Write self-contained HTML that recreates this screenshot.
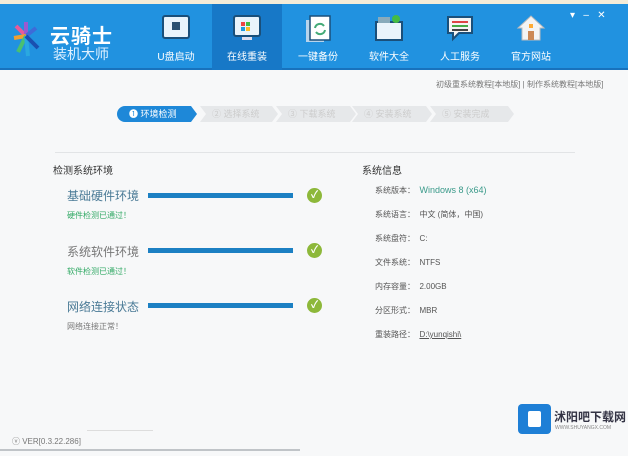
<!DOCTYPE html>
<html><head><meta charset="utf-8"><style>
*{margin:0;padding:0;box-sizing:border-box}
body{width:628px;height:456px;background:#f7f8f9;font-family:"Liberation Sans","Noto Sans CJK SC",sans-serif;position:relative;overflow:hidden;color:#555}
.abs{position:absolute}
#top{left:0;top:0;width:628px;height:4px;background:#f4ecd8}
#hdr{left:0;top:4px;width:628px;height:66px;background:#2192e0;border-bottom:2px solid #1872bd}
.tab{position:absolute;top:4px;width:70px;height:66px;color:#fff;font-size:10px;text-align:center}
.tab svg{display:block;margin:10px auto 6px}
.sel{background:#1778c7}
.t{position:absolute;font-size:10px;white-space:nowrap}
.bar{position:absolute;left:148px;width:145px;height:5px;background:#1c80c3}
.chk{position:absolute;left:307px;width:15px;height:15px;border-radius:50%;background:#8db83a;color:#fff;font-size:10px;text-align:center;line-height:15px;font-weight:bold}
.step{position:absolute;top:106px;height:16px;background:#e6e8ea;color:#ccc;font-size:9px;line-height:16px;padding-left:12px;clip-path:polygon(0 0,calc(100% - 6px) 0,100% 50%,calc(100% - 6px) 100%,0 100%,6px 50%)}
</style></head><body>
<div id="top" class="abs"></div>
<div id="hdr" class="abs"></div>
<svg class="abs" style="left:12px;top:18px" width="28" height="40" viewBox="0 0 28 40">
<path d="M14 18 L4 8" stroke="#e85a9a" stroke-width="4"/><path d="M14 18 L14 4" stroke="#9b59d0" stroke-width="4"/><path d="M14 18 L24 10" stroke="#3e6bd8" stroke-width="4"/><path d="M14 18 L2 20" stroke="#f0a030" stroke-width="4"/><path d="M14 18 L6 34" stroke="#4ac070" stroke-width="4"/><path d="M14 18 L16 38" stroke="#2aa8e0" stroke-width="4"/><path d="M14 18 L26 30" stroke="#1a50b0" stroke-width="4"/></svg>
<div class="t" style="left:50px;top:20px;color:#fff;font-size:20px;font-weight:bold;letter-spacing:1px">云骑士</div>
<div class="t" style="left:53px;top:44px;color:#dff0ff;font-size:14px">装机大师</div>
<div class="tab" style="left:141px"><svg width="30" height="28"><rect x="2" y="2" width="26" height="22" rx="2" fill="#e9f3fb" stroke="#1a4f7a" stroke-width="2"/><rect x="11" y="8" width="8" height="8" fill="#2a4f70"/></svg>U盘启动</div>
<div class="tab sel" style="left:212px"><svg width="30" height="28"><rect x="2" y="2" width="26" height="20" rx="2" fill="#e9f3fb" stroke="#1a4f7a" stroke-width="2"/><rect x="9" y="8" width="4" height="4" fill="#e44"/><rect x="14" y="8" width="4" height="4" fill="#4b4"/><rect x="9" y="13" width="4" height="4" fill="#29d"/><rect x="14" y="13" width="4" height="4" fill="#fb2"/><rect x="10" y="23" width="10" height="3" fill="#dde"/></svg>在线重装</div>
<div class="tab" style="left:283px"><svg width="30" height="28"><rect x="3" y="6" width="18" height="22" fill="#b8d4ec"/><rect x="7" y="2" width="20" height="24" fill="#fff" stroke="#1a4f7a" stroke-width="1.5"/><path d="M12 14a5 5 0 0 1 9-2M22 16a5 5 0 0 1-9 2" stroke="#4a7" stroke-width="2" fill="none"/></svg>一键备份</div>
<div class="tab" style="left:354px"><svg width="30" height="28"><rect x="2" y="8" width="26" height="18" fill="#e9f3fb" stroke="#1a4f7a" stroke-width="2"/><rect x="4" y="3" width="12" height="6" fill="#8ab"/><circle cx="22" cy="5" r="4" fill="#4b4"/></svg>软件大全</div>
<div class="tab" style="left:425px"><svg width="30" height="28"><path d="M3 3h24v16H14l-6 6v-6H3z" fill="#f4f4f4" stroke="#1a4f7a" stroke-width="2"/><rect x="7" y="7" width="16" height="2" fill="#d44"/><rect x="7" y="11" width="16" height="2" fill="#4a4"/><rect x="7" y="15" width="16" height="2" fill="#444"/></svg>人工服务</div>
<div class="tab" style="left:496px"><svg width="30" height="28"><path d="M15 2L2 14h4v12h18V14h4z" fill="#f4f4f4" stroke="#bbb"/><rect x="12" y="17" width="6" height="9" fill="#c85"/><rect x="13" y="10" width="4" height="4" fill="#fa3"/></svg>官方网站</div>
<div class="t" style="left:570px;top:10px;color:#fff;font-size:10px">▾&nbsp;&nbsp;&nbsp;–&nbsp;&nbsp;&nbsp;✕</div>
<div class="t" style="left:436px;top:79px;font-size:8px;color:#777">初级重系统教程[本地版] | 制作系统教程[本地版]</div>
<div class="step" style="left:117px;width:80px;background:#1e88d8;color:#fff;border-radius:8px 0 0 8px;clip-path:polygon(0 0,calc(100% - 6px) 0,100% 50%,calc(100% - 6px) 100%,0 100%)">❶ 环境检测</div>
<div class="step" style="left:200px;width:78px">② 选择系统</div>
<div class="step" style="left:276px;width:80px">③ 下载系统</div>
<div class="step" style="left:352px;width:80px">④ 安装系统</div>
<div class="step" style="left:430px;width:84px">⑤ 安装完成</div>
<div class="abs" style="left:55px;top:152px;width:520px;height:1px;background:#e2e4e6"></div>
<div class="t" style="left:53px;top:162px;color:#333">检测系统环境</div>
<div class="t" style="left:362px;top:162px;color:#333">系统信息</div>
<div class="t" style="left:67px;top:187px;font-size:12px;color:#4a7a96">基础硬件环境</div>
<div class="t" style="left:67px;top:210px;font-size:8px;color:#3a6">硬件检测已通过！</div>
<div class="bar" style="top:193px"></div><div class="chk" style="top:188px">✓</div>
<div class="t" style="left:67px;top:243px;font-size:12px;color:#777">系统软件环境</div>
<div class="t" style="left:67px;top:266px;font-size:8px;color:#3a6">软件检测已通过！</div>
<div class="bar" style="top:248px"></div><div class="chk" style="top:243px">✓</div>
<div class="t" style="left:67px;top:298px;font-size:12px;color:#4a7a96">网络连接状态</div>
<div class="t" style="left:67px;top:321px;font-size:8px;color:#777">网络连接正常！</div>
<div class="bar" style="top:303px"></div><div class="chk" style="top:298px">✓</div>
<div class="t" style="left:375px;top:185px;font-size:8px;color:#555">系统版本：&nbsp; <span style="color:#3a9a8a;font-size:9px">Windows 8 (x64)</span></div>
<div class="t" style="left:375px;top:209px;font-size:8px">系统语言：&nbsp; 中文 (简体，中国)</div>
<div class="t" style="left:375px;top:233px;font-size:8px">系统盘符：&nbsp; C:</div>
<div class="t" style="left:375px;top:257px;font-size:8px">文件系统：&nbsp; NTFS</div>
<div class="t" style="left:375px;top:281px;font-size:8px">内存容量：&nbsp; 2.00GB</div>
<div class="t" style="left:375px;top:305px;font-size:8px">分区形式：&nbsp; MBR</div>
<div class="t" style="left:375px;top:329px;font-size:8px">重装路径：&nbsp; <u>D:\yunqishi\</u></div>
<div class="abs" style="left:87px;top:430px;width:66px;height:1px;background:#ddd"></div>
<div class="t" style="left:12px;top:436px;font-size:8px;color:#777">ⓥ VER[0.3.22.286]</div>
<div class="abs" style="left:0;top:449px;width:300px;height:2px;background:#c0c4c8"></div>
<div class="abs" style="left:518px;top:404px;width:33px;height:30px;background:#1e7fd6;border-radius:4px"></div>
<div class="abs" style="left:528px;top:411px;width:13px;height:16px;background:#fff;border-radius:2px"></div>
<div class="t" style="left:554px;top:408px;font-size:12px;font-weight:bold;color:#334">沭阳吧下载网</div>
<div class="t" style="left:555px;top:425px;font-size:5px;color:#888">WWW.SHUYANGX.COM</div>
</body></html>
